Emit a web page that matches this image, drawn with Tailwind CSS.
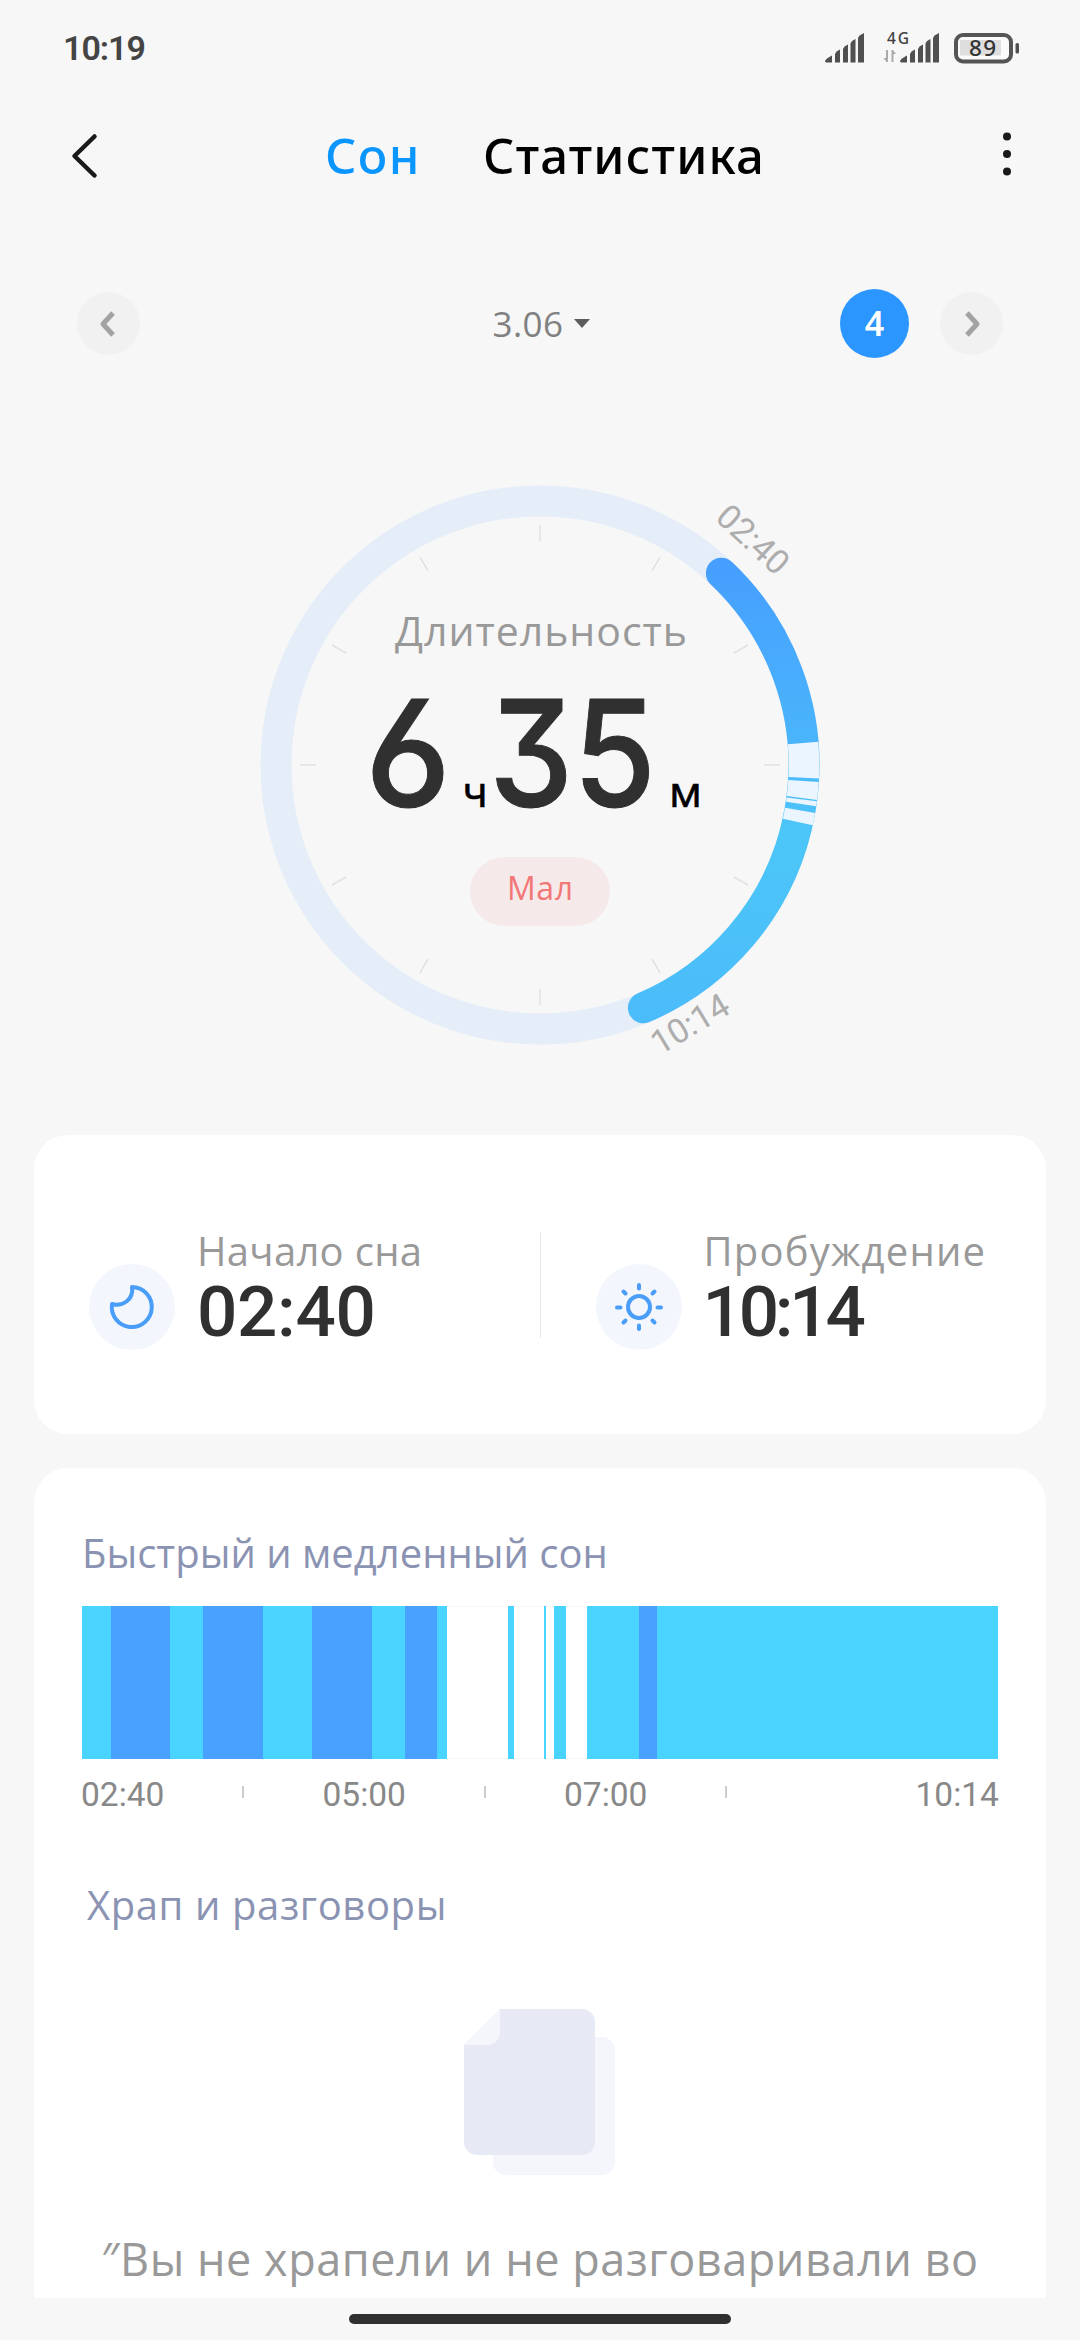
<!DOCTYPE html>
<html lang="ru">
<head>
  <meta charset="UTF-8" />
  <meta name="viewport" content="width=device-width, initial-scale=1.0" />
  <title>Сон</title>
  <script src="https://cdn.jsdelivr.net/npm/@tailwindcss/browser@4"></script>
</head>
<body class="w-[1080px] h-[2340px] overflow-hidden bg-[#f7f7f7] font-['Open_Sans','Noto_Sans',sans-serif] flex flex-col">

  <!-- Status bar -->
  <header class="h-24 pl-[63px] pr-[61px] flex items-center justify-between shrink-0">
    <span class="font-['Roboto',sans-serif] font-semibold text-[34px] leading-none tracking-[-1px] text-[#444]">10:19</span>
    <svg class="w-[196px] h-[44px] -mt-0.5" viewBox="822 24 196 44" fill="#505050">
      <path id="signal" d="M824 60.500q0-2.500 7-6v7h-6zM834 53l1.500-2.500 3.500-2v13h-5zM842 48l1.500-2.500 3.500-2v18h-5zM849.500 42.500l1.500-2.500 3.500-2v23.500h-5zM857 37l1.500-2.500 4.500-2.500v29.500h-6z" />
      <use href="#signal" x="75" />
      <text x="886" y="42.500" font-family="Noto Sans, sans-serif" font-size="15.500" font-weight="500" textLength="22" fill="#404040">4G</text>
      <path d="M887 49v12h-1.500l-3-4h2.500v-8zM890.500 61V49h1.500l3 4h-2.500v8z" fill="#aaa" />
      <rect x="955" y="34" width="55" height="26.500" rx="7" fill="#fafafa" stroke="#555" stroke-width="4" />
      <rect x="959" y="39" width="41" height="15.500" rx="1" fill="#dedede" />
      <rect x="1014.500" y="42" width="3.500" height="10.500" rx="1.500" />
      <text x="968" y="55" font-family="Noto Sans, sans-serif" font-size="22.500" font-weight="500" textLength="27" fill="#333">89</text>
    </svg>
  </header>

  <!-- Title bar -->
  <nav class="h-[120px] pl-[67px] pr-[69px] flex items-center justify-between shrink-0">
    <svg class="w-8 h-12" viewBox="0 0 32 48" fill="none" stroke="#1a1a1a" stroke-width="4.500" stroke-linecap="round" stroke-linejoin="round">
      <path d="M27.500 4.500L7.500 24l20 19.500" />
    </svg>
    <div class="flex gap-[62px] -mt-0.5 mr-3 font-['Noto_Sans',sans-serif] font-medium text-[49px] leading-[60px]">
      <span class="text-[#0a95ff] tracking-[1.5px]">Сон</span>
      <span class="text-black tracking-[1.2px]">Статистика</span>
    </div>
    <svg class="w-2 h-12" viewBox="0 0 8 48" fill="#1a1a1a">
      <circle cx="4" cy="4.500" r="4" /><circle cx="4" cy="22" r="4" /><circle cx="4" cy="39.500" r="4" />
    </svg>
  </nav>

  <!-- Date switcher -->
  <div class="h-[215px] px-[77px] grid grid-cols-3 items-center shrink-0">
    <div class="size-[63px] rounded-full bg-[#f1f1f1] flex items-center justify-center">
      <svg class="w-4 h-[26px] mr-1" viewBox="0 0 16 26" fill="none" stroke="#a3a3a3" stroke-width="5"><path d="M14 2L4 13l10 11" stroke-linejoin="round" /></svg>
    </div>
    <div class="flex items-center justify-center gap-2.5 text-[#808080] text-[35px] leading-10 pl-0.5">
      <span class="tracking-[0.5px]">3.06</span>
      <svg class="w-4 h-[9px]" viewBox="0 0 16 9" fill="#5c5c5c"><path d="M0 0h16L8 9z" /></svg>
    </div>
    <div class="flex items-center justify-end gap-[31px]">
      <div class="size-[69px] rounded-full bg-[#2b96ff] text-white text-[34px] font-['Noto_Sans',sans-serif] font-semibold flex items-center justify-center">4</div>
      <div class="size-[63px] rounded-full bg-[#f1f1f1] flex items-center justify-center">
        <svg class="w-4 h-[26px] ml-1" viewBox="0 0 16 26" fill="none" stroke="#a3a3a3" stroke-width="5"><path d="M2 2l10 11L2 24" stroke-linejoin="round" /></svg>
      </div>
    </div>
  </div>

  <!-- Sleep dial, 24 hours on the ring -->
  <svg class="w-[1080px] h-[704px] shrink-0" viewBox="0 431 1080 704">
    <defs>
      <linearGradient id="sleep" gradientUnits="userSpaceOnUse" x1="0" y1="560" x2="0" y2="1020">
        <stop offset="0" stop-color="#469eff" />
        <stop offset="0.400" stop-color="#4ab5fb" />
        <stop offset="0.600" stop-color="#4cc6f8" />
        <stop offset="1" stop-color="#4bbcfa" />
      </linearGradient>
    </defs>
    <circle cx="540" cy="765" r="264" fill="none" stroke="#e5eef8" stroke-width="31" />
    <!-- hour marks -->
    <circle cx="540" cy="765" r="232" fill="none" stroke="#e2e2e2" stroke-width="16" pathLength="360" stroke-dasharray="0.400 29.600" stroke-dashoffset="0.200" />
    <path d="M721.400 573.200A264 264 0 0 1 643.400 1007.800" fill="none" stroke="url(#sleep)" stroke-width="31" stroke-linecap="round" />
    <!-- awake gaps -->
    <circle cx="540" cy="765" r="264" fill="none" stroke="#ebf5ff" stroke-width="30.500" pathLength="360" transform="rotate(-90 540 765)" stroke-dasharray="0 85.200 7.600 0.700 3.700 0.300 1 1.400 2.600 257.500" />
    <g font-family="Roboto, sans-serif" font-size="34" fill="#adadad" text-anchor="middle">
      <text transform="translate(745 548) rotate(43)">02:40</text>
      <text transform="translate(696 1034) rotate(-31)">10:14</text>
    </g>
    <text x="395" y="646" font-size="41" textLength="292" fill="#999">Длительность</text>
    <g font-family="Inter, sans-serif" font-size="149" font-weight="500" fill="#303030" stroke="#303030" stroke-width="1" style="font-feature-settings:'cv03','cv09'">
      <text x="365" y="807" textLength="86" lengthAdjust="spacingAndGlyphs">6</text>
      <text x="489" y="807" textLength="167" lengthAdjust="spacingAndGlyphs">35</text>
    </g>
    <g font-family="Noto Sans, sans-serif" font-size="42" fill="#000" stroke="#000" stroke-width="0.500">
      <text x="463" y="807">ч</text>
      <text x="669" y="807" textLength="33" lengthAdjust="spacingAndGlyphs">м</text>
    </g>
    <rect x="470" y="857" width="140" height="69" rx="34.500" fill="#f6e9e9" />
    <text x="507" y="900" font-size="32" textLength="66" fill="#f27777">Мал</text>
  </svg>

  <!-- Sleep start / wake up -->
  <section class="mx-[34px] h-[299px] rounded-[34px] bg-white flex items-center shrink-0">
    <div class="flex-1 pl-[55px] pt-2 flex items-end gap-6">
      <div class="size-[86px] rounded-full bg-[#f3f7fd] flex items-center justify-center">
        <svg class="size-12" viewBox="0 0 48 48" fill="none" stroke="#4a9df8" stroke-width="4" stroke-linejoin="round">
          <path d="M24 4A20 20 0 1 1 4 21C14 24 26 17 24 4z" />
        </svg>
      </div>
      <div>
        <p class="text-[40px] leading-[46px] text-[#999] tracking-[0.3px] -ml-0.5">Начало сна</p>
        <p class="font-['Roboto',sans-serif] font-medium text-[71px] leading-[76px] text-[#303030] tracking-[-0.3px] -ml-0.5">02:40</p>
      </div>
    </div>
    <div class="w-px h-[106px] bg-[#e6e6e6]"></div>
    <div class="flex-1 pl-[55px] pt-2 flex items-end gap-6">
      <div class="size-[86px] rounded-full bg-[#f3f7fd] flex items-center justify-center shrink-0">
        <svg class="size-[52px]" viewBox="0 0 52 52" fill="none" stroke="#4a9df8" stroke-width="4" stroke-linecap="round">
          <circle cx="26" cy="26" r="11" />
          <path d="M26 4v3.500M26 44.500V48M4 26.500h3.500M44.500 26.500H48M10.500 10.500l2 2M39.500 12.500l2-2M10.500 41.500l2-2M39.500 39.500l2 2" />
        </svg>
      </div>
      <div>
        <p class="text-[40px] leading-[46px] text-[#999] tracking-[1.2px] -ml-0.5">Пробуждение</p>
        <p class="font-['Roboto',sans-serif] font-medium text-[71px] leading-[76px] text-[#303030] tracking-[-4.2px] -ml-[3px]">10:14</p>
      </div>
    </div>
  </section>

  <!-- Phases and snoring -->
  <section class="mx-[34px] mt-[34px] h-[830px] rounded-t-[34px] bg-white px-12 pt-[60px] overflow-hidden shrink-0">
    <h2 class="text-[40px] leading-[50px] text-[#8b93b3]">Быстрый и медленный сон</h2>
    <div id="phases" class="mt-[28px] h-[153px] flex border-y border-[#f7f7f7]"></div>
    <div class="mt-[16px] h-10 flex justify-between font-['Roboto',sans-serif] text-[33.5px] leading-10 text-[#888] -mx-px">
      <span>02:40</span>
      <span class="w-0.5 h-3 mt-[11px] bg-[#ccc]"></span>
      <span>05:00</span>
      <span class="w-0.5 h-3 mt-[11px] bg-[#ccc]"></span>
      <span>07:00</span>
      <span class="w-0.5 h-3 mt-[11px] bg-[#ccc] mr-[110px]"></span>
      <span>10:14</span>
    </div>
    <h2 class="mt-[65px] pl-[5px] text-[40px] leading-[50px] text-[#8b93b3] tracking-[0.6px]">Храп и разговоры</h2>
    <svg class="w-[152px] h-[167px] mt-[79px] ml-[382px]" viewBox="0 0 152 167">
      <rect x="29" y="28" width="122" height="138" rx="13" fill="#f5f6fb" />
      <path d="M36 0H118a13 13 0 0 1 13 13V133a13 13 0 0 1-13 13H13a13 13 0 0 1-13-13V36z" fill="#e7eaf4" />
      <path d="M36 0V23a13 13 0 0 1-13 13H0z" fill="#f4f6fc" />
    </svg>
    <p class="mt-[53px] text-center text-[45px] leading-[60px] text-[#999] tracking-[0.55px] whitespace-nowrap">″Вы не храпели и не разговаривали во</p>
  </section>

  <!-- Home indicator -->
  <div class="h-[42px] flex justify-center pt-4 shrink-0">
    <div class="w-[382px] h-[10px] rounded-full bg-[#303030]"></div>
  </div>

  <script>
    // [phase, width in px]
    const phases = [
      ['light', 29], ['deep', 59], ['light', 33], ['deep', 60], ['light', 49], ['deep', 60],
      ['light', 33], ['deep', 32], ['light', 10], ['awake', 61], ['light', 6], ['awake', 30],
      ['light', 2], ['awake', 8], ['light', 12], ['awake', 20.500], ['light', 52.500], ['deep', 18], ['light', 341]
    ];
    const colors = { light: 'bg-[#49d3ff]', deep: 'bg-[#48a1ff]', awake: 'bg-transparent' };
    document.getElementById('phases').innerHTML = phases
      .map(([type, w]) => `<div class="-my-px shrink-0 ${colors[type]}" style="width:${w}px"></div>`)
      .join('');
  </script>
</body>
</html>
